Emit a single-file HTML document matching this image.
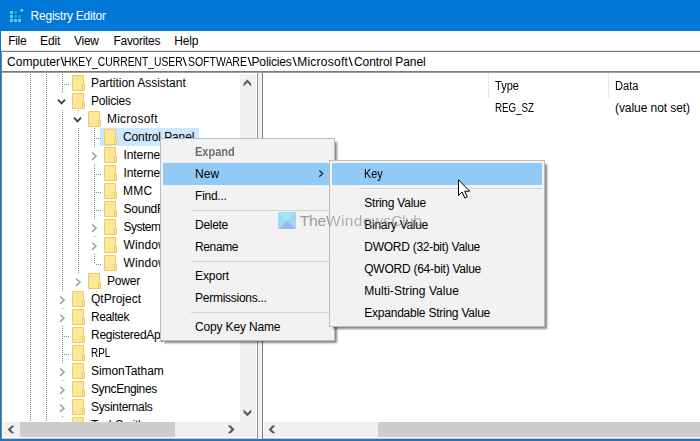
<!DOCTYPE html>
<html>
<head>
<meta charset="utf-8">
<title>Registry Editor</title>
<style>
html,body{margin:0;padding:0;}
body{width:700px;height:441px;overflow:hidden;position:relative;background:#fff;font-family:"Liberation Sans",sans-serif;font-size:12px;color:#000;}
.abs{position:absolute;}
.tx{position:absolute;line-height:16px;height:16px;white-space:pre;}
.vd{position:absolute;width:1px;background-image:linear-gradient(to bottom,#888888 50%,rgba(0,0,0,0) 50%);background-size:1px 2px;}
.hd{position:absolute;height:1px;background-image:linear-gradient(to right,#888888 50%,rgba(0,0,0,0) 50%);background-size:2px 1px;}
#win{position:absolute;left:0;top:0;width:700px;height:441px;background:#fff;overflow:hidden;}
.pop{position:absolute;background:#f2f2f2;border:1px solid #bcbcbc;box-sizing:border-box;box-shadow:3px 3px 2px -1px rgba(0,0,0,0.48);}
.sep{position:absolute;height:1px;background:#d2d2d2;}
.hl{position:absolute;background:#91c9f7;}
</style>
</head>
<body>
<div id="win">

<div class="abs" style="left:0;top:0;width:700px;height:31px;background:#0078d7"></div>
<svg class="abs" style="left:9px;top:6px" width="16" height="17" viewBox="0 0 16 17">
<g fill="#5ccaf6"><rect x="1" y="5" width="3" height="3"/><rect x="1" y="9" width="3" height="3"/>
<rect x="1" y="13" width="3" height="3"/><rect x="5" y="13" width="3" height="3"/><rect x="9" y="13" width="3" height="3"/></g>
<g fill="#0f62a6" opacity="0.85"><rect x="4.3" y="4.3" width="4.4" height="8.4"/><rect x="8.3" y="8.3" width="4.4" height="4.4"/></g>
<g fill="#12a6da"><rect x="5" y="5" width="3" height="3"/><rect x="5" y="9" width="3" height="3"/><rect x="9" y="9" width="3" height="3"/></g>
<path d="M12.7 1.6 L15.4 4.3 L12.7 7.0 L10.0 4.3 Z" fill="#0f62a6" opacity="0.85"/>
<path d="M12.7 2.5 L14.5 4.3 L12.7 6.1 L10.9 4.3 Z" fill="#86e0fd"/></svg>
<div class="tx" style="left:30.60px;top:7.50px;letter-spacing:-0.234px;color:#fff;">Registry Editor</div>
<div class="tx" style="left:8.20px;top:33.00px;letter-spacing:-0.311px;">File</div>
<div class="tx" style="left:40.10px;top:33.00px;letter-spacing:-0.147px;">Edit</div>
<div class="tx" style="left:74.00px;top:33.00px;letter-spacing:-0.274px;">View</div>
<div class="tx" style="left:113.50px;top:33.00px;letter-spacing:-0.295px;">Favorites</div>
<div class="tx" style="left:174.30px;top:33.00px;letter-spacing:-0.147px;">Help</div>
<div class="abs" style="left:1px;top:50px;width:699px;height:1px;background:#e3e3e3"></div>
<div class="abs" style="left:1px;top:51px;width:699px;height:21px;background:#fff;border:1px solid #7a7a7a;border-right:none;box-sizing:border-box"></div>
<div class="abs" style="left:1px;top:72px;width:699px;height:1px;background:#a0a0a0"></div>
<div class="tx" style="left:7.00px;top:53.50px;letter-spacing:0.039px;">Computer</div>
<div class="tx" style="left:60.63px;top:53.50px;letter-spacing:-0.004px;transform:scaleX(1.3);transform-origin:50% 50%;letter-spacing:0;width:3.33px;">\</div>
<div class="tx" style="left:63.60px;top:53.50px;letter-spacing:0.000px;transform:scaleX(0.8600);transform-origin:0 50%;">HKEY_CURRENT_USER</div>
<div class="tx" style="left:182.93px;top:53.50px;letter-spacing:-0.004px;transform:scaleX(1.3);transform-origin:50% 50%;letter-spacing:0;width:3.33px;">\</div>
<div class="tx" style="left:188.40px;top:53.50px;letter-spacing:0.000px;transform:scaleX(0.8718);transform-origin:0 50%;">SOFTWARE</div>
<div class="tx" style="left:247.83px;top:53.50px;letter-spacing:-0.004px;transform:scaleX(1.3);transform-origin:50% 50%;letter-spacing:0;width:3.33px;">\</div>
<div class="tx" style="left:251.50px;top:53.50px;letter-spacing:-0.145px;">Policies</div>
<div class="tx" style="left:292.53px;top:53.50px;letter-spacing:-0.004px;transform:scaleX(1.3);transform-origin:50% 50%;letter-spacing:0;width:3.33px;">\</div>
<div class="tx" style="left:297.20px;top:53.50px;letter-spacing:0.257px;">Microsoft</div>
<div class="tx" style="left:349.13px;top:53.50px;letter-spacing:-0.004px;transform:scaleX(1.3);transform-origin:50% 50%;letter-spacing:0;width:3.33px;">\</div>
<div class="tx" style="left:354.00px;top:53.50px;letter-spacing:-0.086px;">Control Panel</div>
<div class="abs" id="tree" style="left:1px;top:73px;width:239px;height:349px;overflow:hidden;background:#fff"><div class="abs" style="left:-1px;top:-73px">
<div class="vd" style="left:30px;top:74px;height:367px"></div>
<div class="vd" style="left:46px;top:74px;height:367px"></div>
<div class="vd" style="left:62px;top:74px;height:367px"></div>
<div class="vd" style="left:78px;top:106px;height:171px"></div>
<div class="vd" style="left:94px;top:124px;height:140px"></div>
<div class="abs" style="left:100px;top:128px;width:99px;height:18px;background:#cce8ff"></div>
<div class="hd" style="left:64px;top:84px;width:6px"></div>
<svg class="abs" style="left:72px;top:75px" width="14" height="16" viewBox="0 0 14 16"><path d="M0.5 0.5H11.5V9.5H12.5V15.5H0.5Z" fill="#fde695" stroke="#f0cb5e" stroke-width="1"/><path d="M11.5 9.5H10.5V15.5" stroke="#f0cb5e" stroke-width="1" fill="none"/></svg>
<div class="tx" style="left:91.00px;top:75.00px;letter-spacing:-0.036px;">Partition Assistant</div>
<div class="abs" style="left:57px;top:93px;width:11px;height:16px;background:#fff"></div>
<svg class="abs" style="left:0;top:0;overflow:visible" width="1" height="1"><path d="M58.0 99.55 L61.5 103.45 L65.0 99.55" fill="none" stroke="#404040" stroke-width="1.8"/></svg>
<svg class="abs" style="left:72px;top:93px" width="14" height="16" viewBox="0 0 14 16"><path d="M0.5 0.5H11.5V9.5H12.5V15.5H0.5Z" fill="#fde695" stroke="#f0cb5e" stroke-width="1"/><path d="M11.5 9.5H10.5V15.5" stroke="#f0cb5e" stroke-width="1" fill="none"/></svg>
<div class="tx" style="left:91.00px;top:93.00px;letter-spacing:-0.182px;">Policies</div>
<div class="abs" style="left:73px;top:111px;width:11px;height:16px;background:#fff"></div>
<svg class="abs" style="left:0;top:0;overflow:visible" width="1" height="1"><path d="M74.0 117.55 L77.5 121.45 L81.0 117.55" fill="none" stroke="#404040" stroke-width="1.8"/></svg>
<svg class="abs" style="left:88px;top:111px" width="14" height="16" viewBox="0 0 14 16"><path d="M0.5 0.5H11.5V9.5H12.5V15.5H0.5Z" fill="#fde695" stroke="#f0cb5e" stroke-width="1"/><path d="M11.5 9.5H10.5V15.5" stroke="#f0cb5e" stroke-width="1" fill="none"/></svg>
<div class="tx" style="left:107.00px;top:111.00px;letter-spacing:0.224px;">Microsoft</div>
<div class="hd" style="left:96px;top:138px;width:6px"></div>
<svg class="abs" style="left:104px;top:129px" width="14" height="16" viewBox="0 0 14 16"><path d="M0.5 0.5H11.5V9.5H12.5V15.5H0.5Z" fill="#fde695" stroke="#f0cb5e" stroke-width="1"/><path d="M11.5 9.5H10.5V15.5" stroke="#f0cb5e" stroke-width="1" fill="none"/></svg>
<div class="tx" style="left:123.00px;top:129.00px;letter-spacing:-0.109px;">Control Panel</div>
<div class="abs" style="left:89px;top:147px;width:11px;height:16px;background:#fff"></div>
<svg class="abs" style="left:0;top:0;overflow:visible" width="1" height="1"><path d="M92.0 152.5 L96.0 156.2 L92.0 159.9" fill="none" stroke="#a3a3a3" stroke-width="1.6"/></svg>
<svg class="abs" style="left:104px;top:147px" width="14" height="16" viewBox="0 0 14 16"><path d="M0.5 0.5H11.5V9.5H12.5V15.5H0.5Z" fill="#fde695" stroke="#f0cb5e" stroke-width="1"/><path d="M11.5 9.5H10.5V15.5" stroke="#f0cb5e" stroke-width="1" fill="none"/></svg>
<div class="tx" style="left:123.50px;top:147.00px;letter-spacing:-0.094px;">Internet Explorer</div>
<div class="hd" style="left:96px;top:174px;width:6px"></div>
<svg class="abs" style="left:104px;top:165px" width="14" height="16" viewBox="0 0 14 16"><path d="M0.5 0.5H11.5V9.5H12.5V15.5H0.5Z" fill="#fde695" stroke="#f0cb5e" stroke-width="1"/><path d="M11.5 9.5H10.5V15.5" stroke="#f0cb5e" stroke-width="1" fill="none"/></svg>
<div class="tx" style="left:123.50px;top:165.00px;letter-spacing:-0.094px;">Internet Settings</div>
<div class="hd" style="left:96px;top:192px;width:6px"></div>
<svg class="abs" style="left:104px;top:183px" width="14" height="16" viewBox="0 0 14 16"><path d="M0.5 0.5H11.5V9.5H12.5V15.5H0.5Z" fill="#fde695" stroke="#f0cb5e" stroke-width="1"/><path d="M11.5 9.5H10.5V15.5" stroke="#f0cb5e" stroke-width="1" fill="none"/></svg>
<div class="tx" style="left:123.00px;top:183.00px;letter-spacing:0.276px;">MMC</div>
<div class="hd" style="left:96px;top:210px;width:6px"></div>
<svg class="abs" style="left:104px;top:201px" width="14" height="16" viewBox="0 0 14 16"><path d="M0.5 0.5H11.5V9.5H12.5V15.5H0.5Z" fill="#fde695" stroke="#f0cb5e" stroke-width="1"/><path d="M11.5 9.5H10.5V15.5" stroke="#f0cb5e" stroke-width="1" fill="none"/></svg>
<div class="tx" style="left:123.50px;top:201.00px;letter-spacing:-0.241px;">SoundRecorder</div>
<div class="abs" style="left:89px;top:219px;width:11px;height:16px;background:#fff"></div>
<svg class="abs" style="left:0;top:0;overflow:visible" width="1" height="1"><path d="M92.0 224.5 L96.0 228.2 L92.0 231.9" fill="none" stroke="#a3a3a3" stroke-width="1.6"/></svg>
<svg class="abs" style="left:104px;top:219px" width="14" height="16" viewBox="0 0 14 16"><path d="M0.5 0.5H11.5V9.5H12.5V15.5H0.5Z" fill="#fde695" stroke="#f0cb5e" stroke-width="1"/><path d="M11.5 9.5H10.5V15.5" stroke="#f0cb5e" stroke-width="1" fill="none"/></svg>
<div class="tx" style="left:123.50px;top:219.00px;letter-spacing:-0.503px;">SystemCertificates</div>
<div class="abs" style="left:89px;top:237px;width:11px;height:16px;background:#fff"></div>
<svg class="abs" style="left:0;top:0;overflow:visible" width="1" height="1"><path d="M92.0 242.5 L96.0 246.2 L92.0 249.9" fill="none" stroke="#a3a3a3" stroke-width="1.6"/></svg>
<svg class="abs" style="left:104px;top:237px" width="14" height="16" viewBox="0 0 14 16"><path d="M0.5 0.5H11.5V9.5H12.5V15.5H0.5Z" fill="#fde695" stroke="#f0cb5e" stroke-width="1"/><path d="M11.5 9.5H10.5V15.5" stroke="#f0cb5e" stroke-width="1" fill="none"/></svg>
<div class="tx" style="left:123.50px;top:237.00px;letter-spacing:0.077px;">Windows</div>
<div class="hd" style="left:96px;top:264px;width:6px"></div>
<svg class="abs" style="left:104px;top:255px" width="14" height="16" viewBox="0 0 14 16"><path d="M0.5 0.5H11.5V9.5H12.5V15.5H0.5Z" fill="#fde695" stroke="#f0cb5e" stroke-width="1"/><path d="M11.5 9.5H10.5V15.5" stroke="#f0cb5e" stroke-width="1" fill="none"/></svg>
<div class="tx" style="left:123.50px;top:255.00px;letter-spacing:0.077px;">Windows NT</div>
<div class="abs" style="left:73px;top:273px;width:11px;height:16px;background:#fff"></div>
<svg class="abs" style="left:0;top:0;overflow:visible" width="1" height="1"><path d="M76.0 278.5 L80.0 282.2 L76.0 285.9" fill="none" stroke="#a3a3a3" stroke-width="1.6"/></svg>
<svg class="abs" style="left:88px;top:273px" width="14" height="16" viewBox="0 0 14 16"><path d="M0.5 0.5H11.5V9.5H12.5V15.5H0.5Z" fill="#fde695" stroke="#f0cb5e" stroke-width="1"/><path d="M11.5 9.5H10.5V15.5" stroke="#f0cb5e" stroke-width="1" fill="none"/></svg>
<div class="tx" style="left:107.00px;top:273.00px;letter-spacing:-0.203px;">Power</div>
<div class="abs" style="left:57px;top:291px;width:11px;height:16px;background:#fff"></div>
<svg class="abs" style="left:0;top:0;overflow:visible" width="1" height="1"><path d="M60.0 296.5 L64.0 300.2 L60.0 303.9" fill="none" stroke="#a3a3a3" stroke-width="1.6"/></svg>
<svg class="abs" style="left:72px;top:291px" width="14" height="16" viewBox="0 0 14 16"><path d="M0.5 0.5H11.5V9.5H12.5V15.5H0.5Z" fill="#fde695" stroke="#f0cb5e" stroke-width="1"/><path d="M11.5 9.5H10.5V15.5" stroke="#f0cb5e" stroke-width="1" fill="none"/></svg>
<div class="tx" style="left:91.00px;top:291.00px;letter-spacing:-0.002px;">QtProject</div>
<div class="abs" style="left:57px;top:309px;width:11px;height:16px;background:#fff"></div>
<svg class="abs" style="left:0;top:0;overflow:visible" width="1" height="1"><path d="M60.0 314.5 L64.0 318.2 L60.0 321.9" fill="none" stroke="#a3a3a3" stroke-width="1.6"/></svg>
<svg class="abs" style="left:72px;top:309px" width="14" height="16" viewBox="0 0 14 16"><path d="M0.5 0.5H11.5V9.5H12.5V15.5H0.5Z" fill="#fde695" stroke="#f0cb5e" stroke-width="1"/><path d="M11.5 9.5H10.5V15.5" stroke="#f0cb5e" stroke-width="1" fill="none"/></svg>
<div class="tx" style="left:91.00px;top:309.00px;letter-spacing:-0.384px;">Realtek</div>
<div class="hd" style="left:64px;top:336px;width:6px"></div>
<svg class="abs" style="left:72px;top:327px" width="14" height="16" viewBox="0 0 14 16"><path d="M0.5 0.5H11.5V9.5H12.5V15.5H0.5Z" fill="#fde695" stroke="#f0cb5e" stroke-width="1"/><path d="M11.5 9.5H10.5V15.5" stroke="#f0cb5e" stroke-width="1" fill="none"/></svg>
<div class="tx" style="left:91.00px;top:327.00px;letter-spacing:-0.268px;">RegisteredApplications</div>
<div class="hd" style="left:64px;top:354px;width:6px"></div>
<svg class="abs" style="left:72px;top:345px" width="14" height="16" viewBox="0 0 14 16"><path d="M0.5 0.5H11.5V9.5H12.5V15.5H0.5Z" fill="#fde695" stroke="#f0cb5e" stroke-width="1"/><path d="M11.5 9.5H10.5V15.5" stroke="#f0cb5e" stroke-width="1" fill="none"/></svg>
<div class="tx" style="left:91.00px;top:345.00px;letter-spacing:0.000px;transform:scaleX(0.8268);transform-origin:0 50%;">RPL</div>
<div class="abs" style="left:57px;top:363px;width:11px;height:16px;background:#fff"></div>
<svg class="abs" style="left:0;top:0;overflow:visible" width="1" height="1"><path d="M60.0 368.5 L64.0 372.2 L60.0 375.9" fill="none" stroke="#a3a3a3" stroke-width="1.6"/></svg>
<svg class="abs" style="left:72px;top:363px" width="14" height="16" viewBox="0 0 14 16"><path d="M0.5 0.5H11.5V9.5H12.5V15.5H0.5Z" fill="#fde695" stroke="#f0cb5e" stroke-width="1"/><path d="M11.5 9.5H10.5V15.5" stroke="#f0cb5e" stroke-width="1" fill="none"/></svg>
<div class="tx" style="left:91.00px;top:363.00px;letter-spacing:-0.061px;">SimonTatham</div>
<div class="abs" style="left:57px;top:381px;width:11px;height:16px;background:#fff"></div>
<svg class="abs" style="left:0;top:0;overflow:visible" width="1" height="1"><path d="M60.0 386.5 L64.0 390.2 L60.0 393.9" fill="none" stroke="#a3a3a3" stroke-width="1.6"/></svg>
<svg class="abs" style="left:72px;top:381px" width="14" height="16" viewBox="0 0 14 16"><path d="M0.5 0.5H11.5V9.5H12.5V15.5H0.5Z" fill="#fde695" stroke="#f0cb5e" stroke-width="1"/><path d="M11.5 9.5H10.5V15.5" stroke="#f0cb5e" stroke-width="1" fill="none"/></svg>
<div class="tx" style="left:91.00px;top:381.00px;letter-spacing:-0.386px;">SyncEngines</div>
<div class="abs" style="left:57px;top:399px;width:11px;height:16px;background:#fff"></div>
<svg class="abs" style="left:0;top:0;overflow:visible" width="1" height="1"><path d="M60.0 404.5 L64.0 408.2 L60.0 411.9" fill="none" stroke="#a3a3a3" stroke-width="1.6"/></svg>
<svg class="abs" style="left:72px;top:399px" width="14" height="16" viewBox="0 0 14 16"><path d="M0.5 0.5H11.5V9.5H12.5V15.5H0.5Z" fill="#fde695" stroke="#f0cb5e" stroke-width="1"/><path d="M11.5 9.5H10.5V15.5" stroke="#f0cb5e" stroke-width="1" fill="none"/></svg>
<div class="tx" style="left:91.00px;top:399.00px;letter-spacing:-0.331px;">Sysinternals</div>
<div class="abs" style="left:57px;top:417px;width:11px;height:16px;background:#fff"></div>
<svg class="abs" style="left:0;top:0;overflow:visible" width="1" height="1"><path d="M60.0 422.5 L64.0 426.2 L60.0 429.9" fill="none" stroke="#a3a3a3" stroke-width="1.6"/></svg>
<svg class="abs" style="left:72px;top:417px" width="14" height="16" viewBox="0 0 14 16"><path d="M0.5 0.5H11.5V9.5H12.5V15.5H0.5Z" fill="#fde695" stroke="#f0cb5e" stroke-width="1"/><path d="M11.5 9.5H10.5V15.5" stroke="#f0cb5e" stroke-width="1" fill="none"/></svg>
<div class="tx" style="left:91.00px;top:417.00px;letter-spacing:-0.280px;">TechSmith</div>
</div></div>
<div class="abs" style="left:240px;top:74px;width:16px;height:363px;background:#f0f0f0"></div>
<div class="abs" style="left:3px;top:422px;width:253px;height:15px;background:#f0f0f0"></div>
<div class="abs" style="left:20px;top:422px;width:155px;height:15px;background:#cdcdcd"></div>
<svg class="abs" style="left:0;top:0;overflow:visible" width="1" height="1"><polygon points="247.40,79.60 251.20,83.40 251.20,86.40 247.40,82.60 243.60,86.40 243.60,83.40" fill="#595959"/></svg>
<svg class="abs" style="left:0;top:0;overflow:visible" width="1" height="1"><polygon points="247.40,416.30 251.20,412.50 251.20,409.50 247.40,413.30 243.60,409.50 243.60,412.50" fill="#595959"/></svg>
<svg class="abs" style="left:0;top:0;overflow:visible" width="1" height="1"><polygon points="7.60,429.50 11.40,433.30 14.40,433.30 10.60,429.50 14.40,425.70 11.40,425.70" fill="#595959"/></svg>
<svg class="abs" style="left:0;top:0;overflow:visible" width="1" height="1"><polygon points="234.50,429.40 230.70,433.20 227.70,433.20 231.50,429.40 227.70,425.60 230.70,425.60" fill="#595959"/></svg>
<div class="abs" style="left:257px;top:73px;width:6px;height:366px;background:#f3f3f3;border-left:1px solid #8a93a0;border-right:1px solid #767b85;box-sizing:border-box"></div>
<div class="abs" style="left:264px;top:422px;width:436px;height:15px;background:#f0f0f0"></div>
<div class="abs" style="left:378px;top:422px;width:322px;height:15px;background:#cdcdcd"></div>
<svg class="abs" style="left:0;top:0;overflow:visible" width="1" height="1"><polygon points="268.60,429.40 272.40,433.20 275.40,433.20 271.60,429.40 275.40,425.60 272.40,425.60" fill="#595959"/></svg>
<div class="abs" style="left:488px;top:73px;width:1px;height:25px;background:#e5e5e5"></div>
<div class="abs" style="left:608px;top:73px;width:1px;height:25px;background:#e5e5e5"></div>
<div class="tx" style="left:495.00px;top:78.00px;letter-spacing:0.000px;transform:scaleX(0.9225);transform-origin:0 50%;">Type</div>
<div class="tx" style="left:615.00px;top:78.00px;letter-spacing:0.000px;transform:scaleX(0.9267);transform-origin:0 50%;">Data</div>
<div class="tx" style="left:495.00px;top:100.00px;letter-spacing:0.000px;transform:scaleX(0.8122);transform-origin:0 50%;">REG_SZ</div>
<div class="tx" style="left:615.00px;top:100.00px;letter-spacing:-0.070px;">(value not set)</div>
<div class="abs" style="left:0;top:0;width:1px;height:441px;background:#0078d7"></div>
<div class="abs" style="left:1px;top:51px;width:1px;height:388px;background:#7d8791"></div>
<div class="abs" style="left:2px;top:438px;width:255px;height:1px;background:#c4c4c4"></div>
<div class="abs" style="left:263px;top:438px;width:437px;height:1px;background:#c4c4c4"></div>
<div class="abs" style="left:0;top:439px;width:700px;height:1px;background:#3f6f9f"></div>
<div class="abs" style="left:0;top:440px;width:700px;height:1px;background:#0f7ad4"></div>
<div class="pop" style="left:160px;top:138px;width:175px;height:203px"></div>
<div class="hl" style="left:163px;top:163px;width:169px;height:22px"></div>
<div class="sep" style="left:191px;top:210px;width:141px"></div>
<div class="sep" style="left:191px;top:261px;width:141px"></div>
<div class="sep" style="left:191px;top:312px;width:141px"></div>
<div class="tx" style="left:195.10px;top:144.00px;letter-spacing:0.000px;color:#6d6d6d;font-weight:700;transform:scaleX(0.9182);transform-origin:0 50%;">Expand</div>
<div class="tx" style="left:195.10px;top:166.00px;letter-spacing:-0.005px;">New</div>
<div class="tx" style="left:195.10px;top:188.00px;letter-spacing:-0.266px;">Find...</div>
<div class="tx" style="left:195.10px;top:217.00px;letter-spacing:-0.298px;">Delete</div>
<div class="tx" style="left:195.10px;top:239.00px;letter-spacing:-0.410px;">Rename</div>
<div class="tx" style="left:195.10px;top:268.00px;letter-spacing:-0.115px;">Export</div>
<div class="tx" style="left:195.10px;top:290.00px;letter-spacing:-0.276px;">Permissions...</div>
<div class="tx" style="left:195.10px;top:319.00px;letter-spacing:-0.167px;">Copy Key Name</div>
<svg class="abs" style="left:0;top:0;overflow:visible" width="1" height="1"><path d="M319.35 170.5 L322.65000000000003 173.6 L319.35 176.7" fill="none" stroke="#262626" stroke-width="1.3"/></svg>
<svg class="abs" style="left:278px;top:212px" width="18" height="17" viewBox="0 0 18 17"><path d="M0 0H18L9 8.5Z" fill="#9ee8f1"/><path d="M0 0L9 8.5L0 17Z" fill="#9edcf1"/><path d="M18 0V17L9 8.5Z" fill="#9fd4f2"/><path d="M0 17L9 8.5L18 17Z" fill="#9fb6ea"/></svg>
<div class="pop" style="left:329px;top:160px;width:216px;height:167px"></div>
<div class="hl" style="left:332px;top:163px;width:210px;height:22px"></div>
<div class="sep" style="left:360px;top:188px;width:182px"></div>
<div class="tx" style="left:364.30px;top:166.00px;letter-spacing:0.000px;transform:scaleX(0.9039);transform-origin:0 50%;">Key</div>
<div class="tx" style="left:364.30px;top:195.00px;letter-spacing:-0.232px;">String Value</div>
<div class="tx" style="left:364.30px;top:217.00px;letter-spacing:-0.288px;">Binary Value</div>
<div class="tx" style="left:364.30px;top:239.00px;letter-spacing:-0.272px;">DWORD (32-bit) Value</div>
<div class="tx" style="left:364.30px;top:261.00px;letter-spacing:-0.256px;">QWORD (64-bit) Value</div>
<div class="tx" style="left:364.30px;top:283.00px;letter-spacing:0.048px;">Multi-String Value</div>
<div class="tx" style="left:364.30px;top:305.00px;letter-spacing:-0.239px;">Expandable String Value</div>
<div class="tx" style="left:299.70px;top:212.50px;letter-spacing:-0.140px;color:#9c9c9c;font-size:15.5px;">The</div>
<div class="tx" style="background:linear-gradient(to right,#9c9c9c 0,#9c9c9c 3px,rgba(130,130,130,0.62) 3px);-webkit-background-clip:text;background-clip:text;left:326.00px;top:212.50px;letter-spacing:0.344px;color:transparent;font-size:15.5px;">Windows</div>
<div class="tx" style="left:391.30px;top:212.50px;letter-spacing:-0.448px;color:rgba(130,130,130,0.62);font-size:15.5px;">Club</div>
<svg class="abs" style="left:458px;top:179px" width="13" height="20" viewBox="0 0 13 20"><path d="M0.5 0.7 L0.5 16.4 L4.1 13 L6.8 19 L9.3 17.9 L6.7 12.2 L11.7 12.2 Z" fill="#fff" stroke="#000" stroke-width="1"/></svg>
</div>
</body>
</html>
